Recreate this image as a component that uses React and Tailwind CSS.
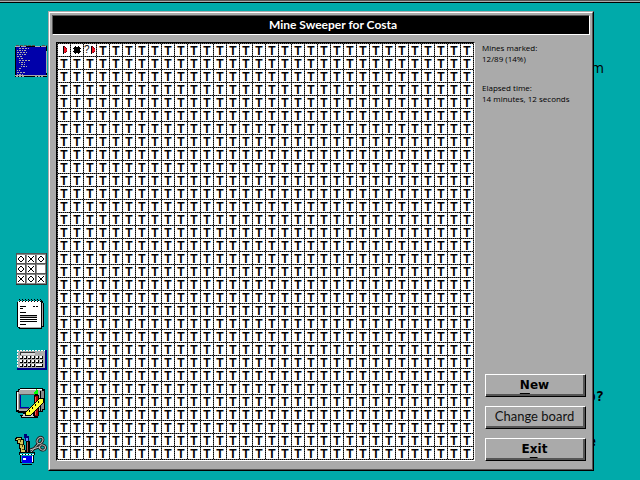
import React from "react";

const COLUMNS = 32;
const ROWS = 32;

const TERMINAL_LINES = [
  [4, 3, 10], [2, 5, 10], [2, 7, 10], [2, 9, 10], [2, 11, 6], [4, 13, 4], [4, 15, 11],
  [4, 17, 6], [6, 19, 4], [6, 21, 6], [4, 23, 3], [2, 25, 3], [2, 27, 9], [2, 29, 6],
];

function Icon({ label, children }) {
  return (
    <svg className="block h-8 w-8 shrink-0" viewBox="0 0 32 32" shapeRendering="crispEdges" role="img" aria-label={label}>
      {children}
    </svg>
  );
}

function TerminalIcon() {
  return (
    <Icon label="Terminal">
      <rect x="0" y="1" width="32" height="31" fill="#000" />
      <rect x="1" y="2" width="30" height="28" fill="#0000aa" />
      <path d="M1 .5H21M27 .5H32" stroke="#555" strokeDasharray="3 1" />
      <path d="M0 1.5H12M20 1.5H31" stroke="#aaa" strokeDasharray="5 1" />
      <path d="M0 30.5H32M31.5 6V28" stroke="#aaa" />
      <path d="M1 31.5H9M20 31.5H29" stroke="#aaa" strokeDasharray="2 1" />
      {TERMINAL_LINES.map(([x, y, w]) => (
        <path key={y} d={`M${x} ${y + 0.5}h${w}`} stroke="#aaa" strokeDasharray={y % 4 === 3 ? "2 1" : "1 1 2 1"} />
      ))}
    </Icon>
  );
}

function NoughtsIcon() {
  const marks = ["OXO", "OX ", "XOX"];
  return (
    <Icon label="Noughts and crosses">
      <rect x="1" y="0" width="31" height="32" fill="#333" />
      <rect x="1" y="0" width="30" height="31" fill="#888" />
      <path d="M2 10.5H31M2 20.5H31M10.5 2V31M20.5 2V31M1.5 0V31M1 .5H31" stroke="#555" />
      {marks.map((row, r) =>
        row.split("").map((mark, c) => (
          <g key={`${r}${c}`} transform={`translate(${2 + c * 10} ${2 + r * 10})`}>
            <rect width="8" height="8" fill="#fff" />
            {mark === "O" && (
              <path d="M3 1h2v1h-2zM2 2h1v1h-1zM5 2h1v1h-1zM1 3h1v2h-1zM6 3h1v2h-1zM2 5h1v1h-1zM5 5h1v1h-1zM3 6h2v1h-2z" fill="#000" />
            )}
            {mark === "X" && (
              <path d="M1 1h1v1h-1zM2 2h1v1h-1zM3 3h2v2h-2zM5 5h1v1h-1zM6 6h1v1h-1zM6 1h1v1h-1zM5 2h1v1h-1zM2 5h1v1h-1zM1 6h1v1h-1z" fill="#000" />
            )}
          </g>
        ))
      )}
    </Icon>
  );
}

function NotepadIcon() {
  return (
    <Icon label="Notepad">
      <path d="M3 3H28V5H29V29H27V31H4V30H3V29H2V4H3Z" fill="#000" />
      <path d="M27.5 5V28M5 29.5H26" stroke="#aaa" />
      <rect x="3" y="3" width="23" height="26" fill="#fff" />
      <path d="M4 1.5H26" stroke="#000" strokeDasharray="1 2" />
      <path d="M5 2.5H27M4 3.5H26" stroke="#000" strokeDasharray="1 2" />
      <path d="M5 8.5H11M18 8.5H20M21 8.5H23M5 10.5H8M5 14.5H11M5 17.5H22M5 19.5H22M5 21.5H22M5 23.5H22M5 26.5H11" stroke="#000" />
      <path d="M5 18.5H22" stroke="#aaa" />
    </Icon>
  );
}

function KeypadIcon() {
  const keys = [[0, 0], [1, 0], [2, 0], [3, 0], [4, 0], [5, 0], [0, 1], [1, 1], [2, 1], [3, 1], [4, 1], [5, 1], [0, 2], [1, 2], [2, 2], [3, 2]];
  return (
    <Icon label="Calculator">
      <rect x="2" y="7" width="30" height="20" fill="#000088" />
      <rect x="2" y="7" width="28" height="18" fill="#aaa" />
      <path d="M2 7.5H30M2.5 7V25" stroke="#00aaaa" />
      <path d="M2 7.5H30M2.5 7V25" stroke="#fff" strokeDasharray="2 1" />
      <path d="M5 9.5H20M5.5 9V12" stroke="#333" />
      <rect x="6" y="10" width="14" height="2" fill="#ddd" />
      {keys.map(([c, r]) => (
        <g key={`${c}${r}`}>
          <rect x={5 + c * 4} y={13 + r * 4} width="3" height="3" fill="#000" />
          <rect x={5 + c * 4} y={13 + r * 4} width="2" height="2" fill="#fff" />
        </g>
      ))}
      <rect x="21" y="21" width="7" height="3" fill="#000" />
      <rect x="21" y="21" width="6" height="2" fill="#fff" />
    </Icon>
  );
}

function PaintIcon() {
  return (
    <Icon label="Paint">
      <path d="M5 0H28V1H30V22H28V24H20V27H21V30H6V28H5V27H8V25H3V24H1V3H3V1H5Z" fill="#000" />
      <path d="M5 1H27V3H25V23H4V22H2V4H4V2H5Z" fill="#aaa" />
      <path d="M5 1.5H27M2.5 4V22" stroke="#fff" />
      <path d="M26 3H29V21H27V23H26Z" fill="#888" />
      <rect x="4" y="6" width="18" height="15" fill="#555" />
      <rect x="5" y="7" width="16" height="13" fill="#00aaaa" />
      <path d="M5.5 7V19.5H14" stroke="#0000aa" fill="none" />
      <path d="M8 26H18V28H19V29H7V28H8Z" fill="#ccc" />
      <path d="M20 5H23V7H24V28H23V30H20V29H19V7H20Z" fill="#000" />
      <rect x="20" y="8" width="3" height="20" fill="#aa0000" />
      <path d="M20.5 9V27" stroke="#ff5555" />
      <path d="M21 1H22V2H23V6H19V4H20V3H21Z" fill="#00ff00" />
      <path d="M25 10H29V14L15 28H10V24Z" fill="#000" />
      <path d="M25 11H28V14L15 27H11V24Z" fill="#ffff33" />
      <path d="M14.5 22v2M17.5 19v2M20.5 16v2M23.5 13v2" stroke="#000" />
    </Icon>
  );
}

function StationeryIcon() {
  return (
    <Icon label="Accessories">
      <path d="M1 4H7V6H9V12H10V17H11V21H5V16H4V11H2V8H0V5H1Z" fill="#000" />
      <path d="M2 5H6V7H8V12H9V17H10V20H6V15H5V10H3V7H1V6H2Z" fill="#d5c55c" />
      <path d="M3 6.5H5.5V9M5 11.5H7.5V14M7 16.5H9" stroke="#554400" fill="none" />
      <path d="M9 1H12V3H14V8H10V5H9Z" fill="#000077" />
      <rect x="11" y="5" width="2" height="3" fill="#5588ff" />
      <rect x="11" y="8" width="4" height="12" fill="#000" />
      <rect x="12" y="9" width="1" height="10" fill="#aa5555" />
      <g shapeRendering="auto" fill="none">
        <path d="M16 19L24 10M15 17L24 14" stroke="#222" strokeWidth="3" />
        <ellipse cx="25" cy="7.5" rx="2.5" ry="3.5" stroke="#222" strokeWidth="3" transform="rotate(35 25 7.5)" />
        <ellipse cx="27.5" cy="14.5" rx="3" ry="2.5" stroke="#222" strokeWidth="3" transform="rotate(20 27.5 14.5)" />
        <path d="M16 19L24 10M15 17L24 14" stroke="#bbb" />
        <ellipse cx="25" cy="7.5" rx="2.5" ry="3.5" stroke="#bbb" transform="rotate(35 25 7.5)" />
        <ellipse cx="27.5" cy="14.5" rx="3" ry="2.5" stroke="#bbb" transform="rotate(20 27.5 14.5)" />
      </g>
      <path d="M4 19H20V22H19V30H17V32H7V30H5V22H4Z" fill="#000" />
      <path d="M6 22H18V29H17V31H7V29H6Z" fill="#00aaaa" />
      <path d="M5 20.5H19" stroke="#00aaaa" />
      <path d="M5 21.5H19" stroke="#fff" strokeDasharray="2 1" />
      <rect x="7" y="23" width="10" height="7" fill="#0000ee" />
      <path d="M8 25h3v2h-3zM17 23h1v6h-1z" fill="#fff" />
    </Icon>
  );
}

function Flag() {
  return (
    <svg className="block h-2 w-[5px] shrink-0" viewBox="0 0 5 8" shapeRendering="crispEdges" aria-hidden="true">
      <path d="M0 0h1v8h-1z" fill="#000" />
      <path d="M1 1h1v1h1v1h1v2h-1v1h-1v1h-1z" fill="#ee1122" />
      <path d="M1 0h1v1h-1zM2 1h1v1h-1zM3 2h1v1h-1zM3 5h1v1h-1zM2 6h1v1h-1z" fill="#770011" />
    </svg>
  );
}

function Mine() {
  return (
    <svg className="block h-2 w-2 shrink-0" viewBox="0 0 8 8" shapeRendering="crispEdges" aria-hidden="true">
      <path d="M1 1h6v6h-6zM2 0h1v8h-1zM5 0h1v8h-1zM0 2h8v1h-8zM0 5h8v1h-8z" fill="#000" />
    </svg>
  );
}

function Cell({ index }) {
  let content = "T";
  let name = "Covered";
  let align = "justify-center pt-0.5";
  if (index === 0) {
    content = <Flag />;
    name = "Flagged";
    align = "pl-[5px]";
  } else if (index === 1) {
    content = <Mine />;
    name = "Mine";
    align = "justify-center";
  } else if (index === 2) {
    content = (
      <>
        <span className="text-[10px] font-normal">?</span>
        <Flag />
      </>
    );
    name = "Unsure";
    align = "justify-between";
  }
  return (
    <button
      type="button"
      aria-label={name}
      className={`flex h-3 items-center bg-white font-['Liberation_Sans',sans-serif] text-xs leading-3 font-bold text-black ${align}`}
    >
      {content}
    </button>
  );
}

function PushButton({ children, className }) {
  return (
    <button
      type="button"
      className={`h-[23px] w-[101px] border border-t-white border-r-black border-b-black border-l-white ${className}`}
    >
      <span className="flex h-[21px] items-center justify-center border-r-2 border-b-2 border-[#555] whitespace-nowrap">
        <span>{children}</span>
      </span>
    </button>
  );
}

export default function App() {
  return (
    <div className="relative flex min-h-screen flex-col overflow-hidden bg-[#00aaaa] font-['Open_Sans',sans-serif] text-black">
      <div className="h-[3px] border-t border-b border-t-[#555] border-b-black bg-[#aaa]" />

      <div className="absolute top-[56px] right-9 text-right font-['Open_Sans',sans-serif] text-sm leading-6">form</div>
      <div className="absolute top-[386px] right-9 font-['DejaVu_Sans_Mono',monospace] text-sm leading-5 font-bold">Help?</div>
      <div className="absolute top-[431px] right-11 font-['DejaVu_Sans_Mono',monospace] text-sm leading-5 font-bold">file</div>

      <div className="flex flex-1 pt-2 pb-[9px]">
        <aside className="flex w-12 shrink-0 flex-col gap-[13px] pt-[34px] pl-[15px]">
          <div className="mb-[163px]">
            <TerminalIcon />
          </div>
          <NoughtsIcon />
          <NotepadIcon />
          <KeypadIcon />
          <PaintIcon />
          <StationeryIcon />
        </aside>

        <main className="relative mr-[46px] flex-1 self-start border border-t-[#aaa] border-r-black border-b-black border-l-[#aaa] bg-[#aaa]">
          <div className="border border-t-white border-r-[#555] border-b-[#555] border-l-white px-0.5 pt-0.5 pb-2">
            <h1 className="h-5 border border-t-[#555] border-r-white border-b-white border-l-[#555] bg-black pl-6 text-center font-['Lato',sans-serif] text-xs leading-[18px] font-bold text-white">
              Mine Sweeper for Costa
            </h1>

            <div className="mt-[7px] flex pr-1 pl-1">
              <section aria-label="Board" className="border border-t-black border-r-white border-b-white border-l-black">
                <div className="grid grid-cols-[repeat(32,12px)] gap-px bg-[repeating-conic-gradient(#000_0_25%,#666_0_50%)] bg-[length:2px_2px] p-px">
                  {Array.from({ length: COLUMNS * ROWS }, (_, i) => (
                    <Cell key={i} index={i} />
                  ))}
                </div>
              </section>

              <div className="flex flex-1 flex-col justify-between pl-[7px]">
                <dl className="text-[8px] leading-[11px] text-black">
                  <dt>Mines marked:</dt>
                  <dd>12/89 (14%)</dd>
                  <dt className="mt-[18px]">Elapsed time:</dt>
                  <dd>14 minutes, 12 seconds</dd>
                </dl>
                <div className="flex flex-col items-end gap-[9px]">
                  <PushButton className="font-['DejaVu_Sans',sans-serif] text-xs font-bold">
                    <span className="underline underline-offset-4">N</span>ew
                  </PushButton>
                  <PushButton className="font-['Lato',sans-serif] text-[13px] text-[#111]">Change board</PushButton>
                  <PushButton className="font-['DejaVu_Sans',sans-serif] text-xs font-bold">
                    E<span className="underline underline-offset-4">x</span>it
                  </PushButton>
                </div>
              </div>
            </div>
          </div>
        </main>
      </div>
    </div>
  );
}
